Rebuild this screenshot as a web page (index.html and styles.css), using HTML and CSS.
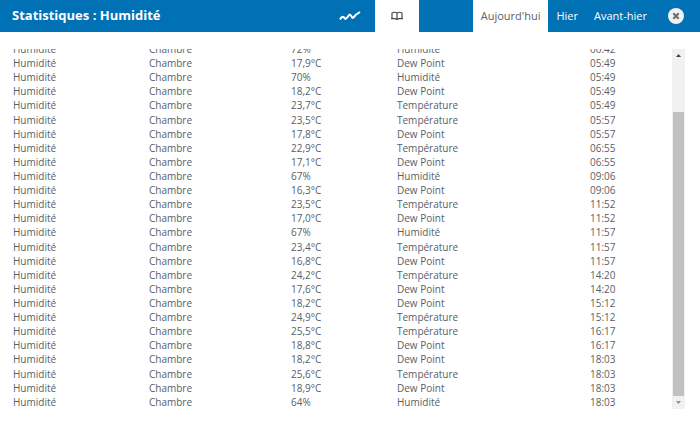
FILE: index.html
```
<!DOCTYPE html>
<html lang="fr">
<head>
    <meta charset="UTF-8">
    <meta name="viewport" content="width=device-width, initial-scale=1.0">
    <title>Statistiques : Humidité</title>
    <link rel="stylesheet" href="styles.css">
</head>
<body>
    <header class="topbar">
        <h1 class="title">Statistiques : Humidité</h1>
        <div class="views">
            <button class="view" type="button" aria-label="Graphique">
                <svg width="22" height="10" viewBox="0 0 22 10"><path d="M1 8.5 Q3 5 4.5 6 L6.5 8 Q8 7 10.5 3.5 Q11.5 3.5 13.5 7 Q15 7 16.5 4 L21 1" fill="none" stroke="#fff" stroke-width="2" stroke-linejoin="round"/></svg>
            </button>
            <button class="view active" type="button" aria-label="Liste">
                <svg width="12" height="10" viewBox="0 0 12 10"><path d="M1 7.5 V2 Q3.5 0.5 6 2 Q8.5 0.5 11 2 V7.5 M6 2 V8" fill="none" stroke="#444b50" stroke-width="1.2"/><path d="M0 7.7 H4.5 L6 8.6 L7.5 7.7 H12" fill="none" stroke="#444b50" stroke-width="1.2"/></svg>
            </button>
        </div>
        <nav class="days">
            <button class="day active" type="button">Aujourd'hui</button>
            <button class="day" type="button">Hier</button>
            <button class="day" type="button">Avant-hier</button>
        </nav>
        <button class="close" type="button" aria-label="Fermer">
            <svg width="16" height="16" viewBox="0 0 16 16"><circle cx="8" cy="8" r="8" fill="#eef0f1"/><path d="M5.3 5.3 L10.7 10.7 M10.7 5.3 L5.3 10.7" stroke="#6b6b6b" stroke-width="2"/></svg>
        </button>
    </header>
    <main class="panel">
        <div class="list">
            <table class="log">
                <tbody>
                    <tr><td>Humidité</td><td>Chambre</td><td>72%</td><td>Humidité</td><td>00:42</td></tr>
                    <tr><td>Humidité</td><td>Chambre</td><td>17,9°C</td><td>Dew Point</td><td>05:49</td></tr>
                    <tr><td>Humidité</td><td>Chambre</td><td>70%</td><td>Humidité</td><td>05:49</td></tr>
                    <tr><td>Humidité</td><td>Chambre</td><td>18,2°C</td><td>Dew Point</td><td>05:49</td></tr>
                    <tr><td>Humidité</td><td>Chambre</td><td>23,7°C</td><td>Température</td><td>05:49</td></tr>
                    <tr><td>Humidité</td><td>Chambre</td><td>23,5°C</td><td>Température</td><td>05:57</td></tr>
                    <tr><td>Humidité</td><td>Chambre</td><td>17,8°C</td><td>Dew Point</td><td>05:57</td></tr>
                    <tr><td>Humidité</td><td>Chambre</td><td>22,9°C</td><td>Température</td><td>06:55</td></tr>
                    <tr><td>Humidité</td><td>Chambre</td><td>17,1°C</td><td>Dew Point</td><td>06:55</td></tr>
                    <tr><td>Humidité</td><td>Chambre</td><td>67%</td><td>Humidité</td><td>09:06</td></tr>
                    <tr><td>Humidité</td><td>Chambre</td><td>16,3°C</td><td>Dew Point</td><td>09:06</td></tr>
                    <tr><td>Humidité</td><td>Chambre</td><td>23,5°C</td><td>Température</td><td>11:52</td></tr>
                    <tr><td>Humidité</td><td>Chambre</td><td>17,0°C</td><td>Dew Point</td><td>11:52</td></tr>
                    <tr><td>Humidité</td><td>Chambre</td><td>67%</td><td>Humidité</td><td>11:57</td></tr>
                    <tr><td>Humidité</td><td>Chambre</td><td>23,4°C</td><td>Température</td><td>11:57</td></tr>
                    <tr><td>Humidité</td><td>Chambre</td><td>16,8°C</td><td>Dew Point</td><td>11:57</td></tr>
                    <tr><td>Humidité</td><td>Chambre</td><td>24,2°C</td><td>Température</td><td>14:20</td></tr>
                    <tr><td>Humidité</td><td>Chambre</td><td>17,6°C</td><td>Dew Point</td><td>14:20</td></tr>
                    <tr><td>Humidité</td><td>Chambre</td><td>18,2°C</td><td>Dew Point</td><td>15:12</td></tr>
                    <tr><td>Humidité</td><td>Chambre</td><td>24,9°C</td><td>Température</td><td>15:12</td></tr>
                    <tr><td>Humidité</td><td>Chambre</td><td>25,5°C</td><td>Température</td><td>16:17</td></tr>
                    <tr><td>Humidité</td><td>Chambre</td><td>18,8°C</td><td>Dew Point</td><td>16:17</td></tr>
                    <tr><td>Humidité</td><td>Chambre</td><td>18,2°C</td><td>Dew Point</td><td>18:03</td></tr>
                    <tr><td>Humidité</td><td>Chambre</td><td>25,6°C</td><td>Température</td><td>18:03</td></tr>
                    <tr><td>Humidité</td><td>Chambre</td><td>18,9°C</td><td>Dew Point</td><td>18:03</td></tr>
                    <tr><td>Humidité</td><td>Chambre</td><td>64%</td><td>Humidité</td><td>18:03</td></tr>
                </tbody>
            </table>
        </div>
        <div class="scrollbar" aria-hidden="true">
            <svg class="arrow" width="5" height="3" viewBox="0 0 5 3"><path d="M0 3 L2.5 0 L5 3 Z" fill="#404040"/></svg>
            <div class="track"><div class="thumb"></div></div>
            <svg class="arrow" width="5" height="3" viewBox="0 0 5 3"><path d="M0 0 L2.5 3 L5 0 Z" fill="#909090"/></svg>
        </div>
    </main>
</body>
</html>
```
FILE: styles.css
```
* {
    box-sizing: border-box;
}

body {
    margin: 0;
    font-family: "Open Sans", sans-serif;
    background-color: #fff;
    color: #596067;
}

button {
    border: none;
    padding: 0;
    background: none;
    font-family: inherit;
    cursor: pointer;
}

.topbar {
    display: flex;
    height: 32px;
    background-color: #0071b5;
}

.title {
    flex: 1;
    margin: 0;
    padding-left: 12px;
    font-size: 13px;
    line-height: 30px;
    color: #fff;
}

.views {
    display: flex;
    margin-right: 54px;
}

.view {
    display: flex;
    align-items: center;
    justify-content: center;
    width: 44px;
}

.view:first-child {
    width: 50px;
}

.days {
    display: flex;
}

.day {
    padding: 0 8px;
    font-size: 11px;
    line-height: 30px;
    color: #fff;
}

.view.active,
.day.active {
    background-color: #fff;
    color: #5b6166;
}

.close {
    display: flex;
    align-items: center;
    margin: 0 16px 0 13px;
}

.panel {
    display: flex;
    height: calc(100vh - 32px);
    padding: 17px 15px 12px 12px;
}

/* starts scrolled to the last entry */
.list {
    display: flex;
    flex-direction: column-reverse;
    flex: 1;
    overflow-y: auto;
    scrollbar-width: none;
}

.log {
    flex: none;
    width: 100%;
    height: 367px;
    table-layout: fixed;
    border-collapse: collapse;
    font-size: 10px;
    line-height: 14px;
}

.log td {
    padding: 0 1px;
}

.log td:nth-child(1) {
    width: 136px;
}

.log td:nth-child(2) {
    width: 142px;
}

.log td:nth-child(3) {
    width: 106px;
}

.log td:nth-child(4) {
    width: 193px;
}

.scrollbar {
    display: flex;
    flex-direction: column;
    align-items: center;
    width: 13px;
    background-color: #f1f1f1;
}

.arrow {
    margin: 5px 0;
}

.track {
    display: flex;
    flex-direction: column;
    justify-content: flex-end;
    flex: 1;
    width: 11px;
}

.thumb {
    height: 85%;
    background-color: #c1c1c1;
}
```
